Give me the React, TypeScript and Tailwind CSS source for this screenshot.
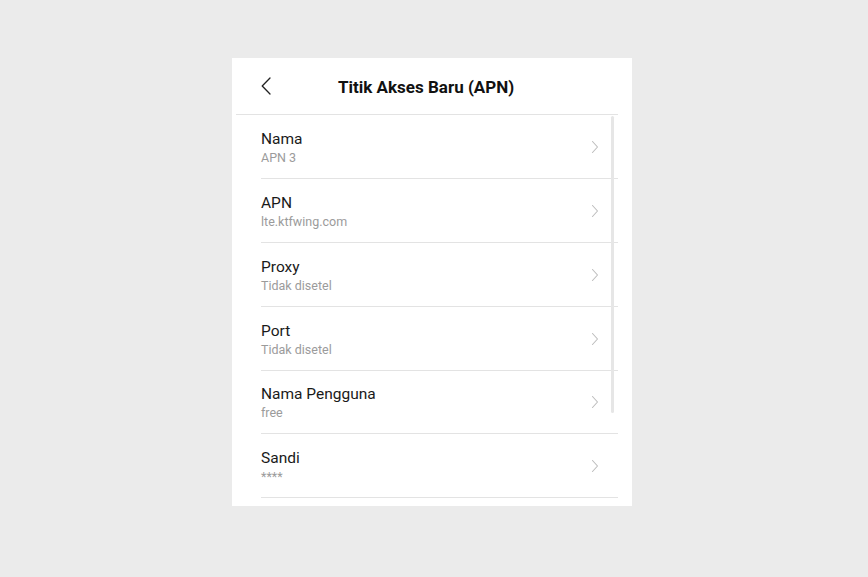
const rows = [
  { title: "Nama", value: "APN 3" },
  { title: "APN", value: "lte.ktfwing.com" },
  { title: "Proxy", value: "Tidak disetel" },
  { title: "Port", value: "Tidak disetel" },
  { title: "Nama Pengguna", value: "free" },
  { title: "Sandi", value: "****" },
];

function Chevron({ className }: { className?: string }) {
  return (
    <svg width="8" height="14" viewBox="0 0 8 14" fill="none" className={className}>
      <path d="M1.5 1.5 L6.5 7 L1.5 12.5" stroke="currentColor" strokeWidth="1.1" strokeLinecap="round" strokeLinejoin="round" />
    </svg>
  );
}

export default function App() {
  return (
    <div className="min-h-[577px] w-full bg-[#ebebeb] pl-[232px] pt-[58px] font-['Roboto',sans-serif]">
      <div className="relative h-[448px] w-[400px] overflow-hidden bg-white">
        {/* header */}
        <div className="ml-[4px] flex h-[57px] w-[382px] items-center border-b border-[#e3e3e3] pt-[3px]">
          <button className="ml-[24px] -mt-[3px] flex h-[20px] w-[12px] items-center justify-center text-[#222]">
            <svg width="10" height="18" viewBox="0 0 10 18" fill="none">
              <path d="M9 1 L1.2 9 L9 17" stroke="currentColor" strokeWidth="1.3" strokeLinecap="round" strokeLinejoin="round" />
            </svg>
          </button>
          <h1 className="ml-[66px] text-[17px] font-bold text-[#111] leading-none">Titik Akses Baru (APN)</h1>
        </div>

        {/* list */}
        <div className="ml-[29px] w-[357px]">
          {rows.map((r, i) => (
            <div
              key={r.title}
              className={`flex items-center justify-between border-b border-[#e3e3e3] pr-[19px] ${i === 4 ? "h-[63px]" : "h-[64px]"}`}
            >
              <div className="flex flex-col pt-[2px]">
                <span className="text-[15.5px] leading-[20px] text-[#1a1a1a]">{r.title}</span>
                <span className="text-[12.5px] leading-[18px] text-[#9b9b9b]">{r.value}</span>
              </div>
              <Chevron className="text-[#bdbdbd]" />
            </div>
          ))}
        </div>

        {/* scrollbar */}
        <div className="absolute left-[379px] top-[58px] h-[297px] w-[3px] rounded-full bg-[#e6e6e6]" />
      </div>
    </div>
  );
}
